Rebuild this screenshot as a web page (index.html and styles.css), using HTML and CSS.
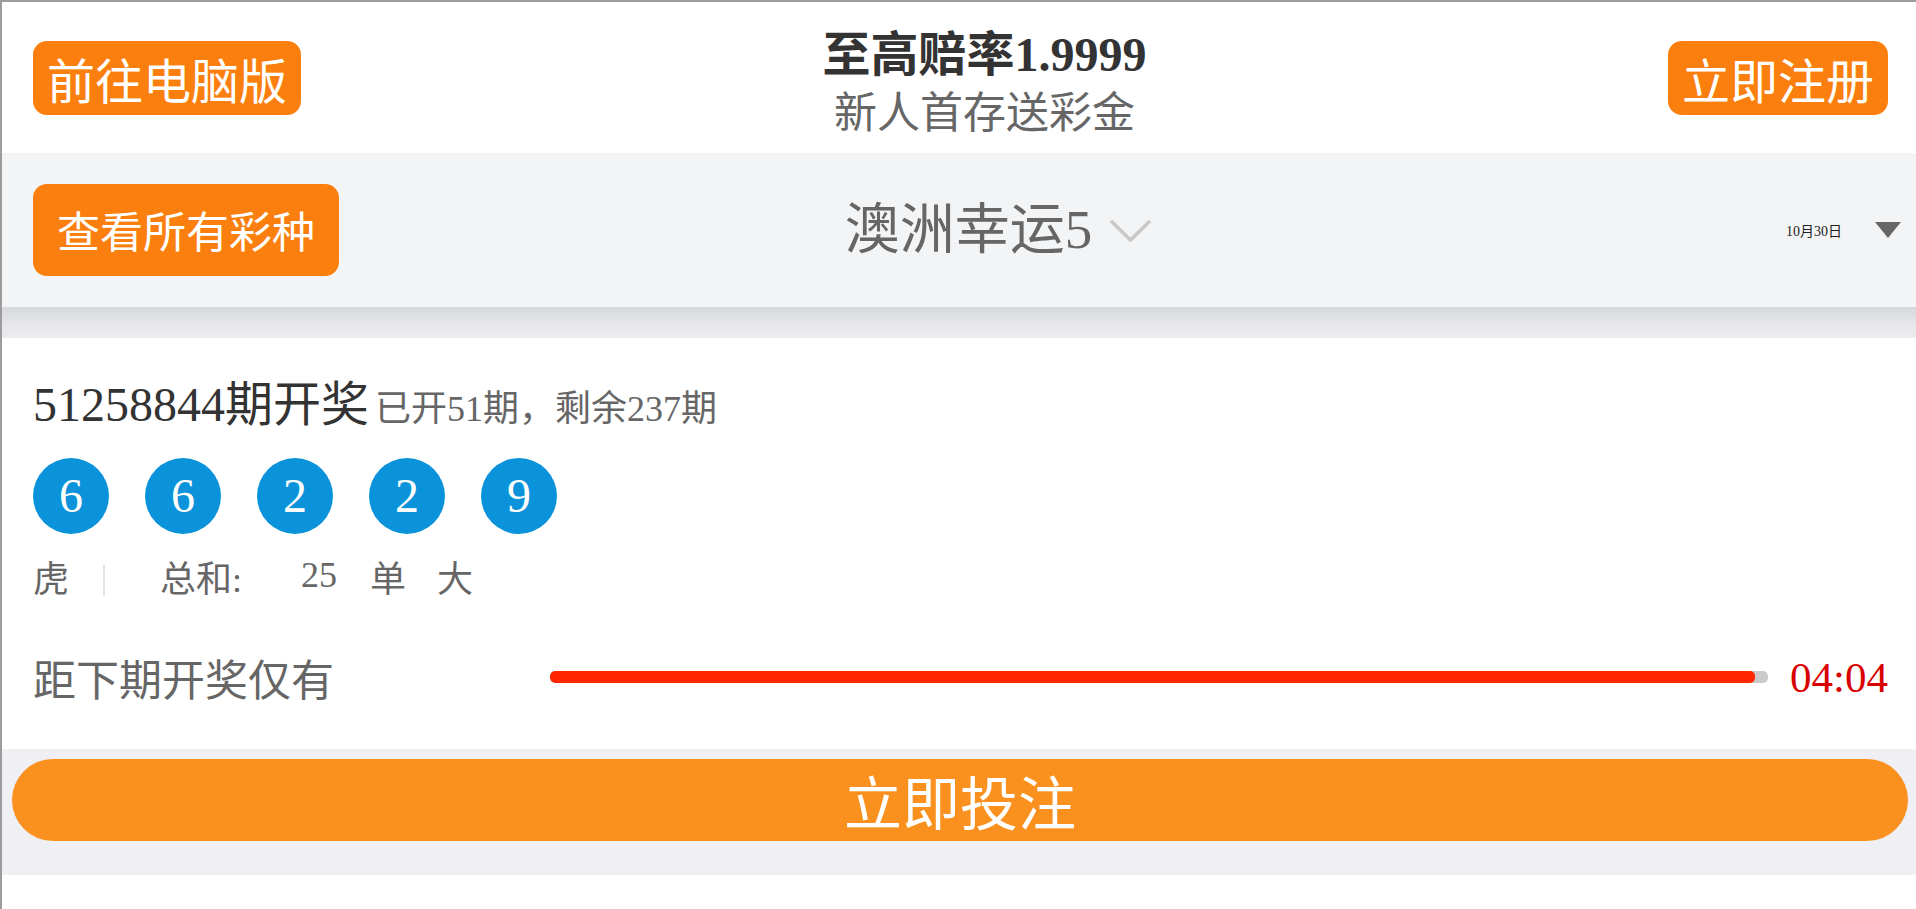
FILE: index.html
```html
<!DOCTYPE html>
<html lang="zh-CN">
<head>
<meta charset="utf-8">
<title>澳洲幸运5</title>
<link rel="stylesheet" href="styles.css">
</head>
<body>
<div class="page">
  <header class="top">
    <a class="btn-o">前往电脑版</a>
    <div class="promo">
      <div class="promo-title">至高赔率1.9999</div>
      <div class="promo-sub">新人首存送彩金</div>
    </div>
    <a class="btn-o">立即注册</a>
  </header>
  <nav class="bar">
    <a class="btn-all">查看所有彩种</a>
    <div class="game">
      <span class="game-name">澳洲幸运5</span>
      <svg class="chev" width="43" height="25" viewBox="0 0 43 25"><polyline points="2,3 21.5,22 41,3" fill="none" stroke="#c8c8c8" stroke-width="3.5"/></svg>
    </div>
    <div class="date">10月30日</div>
    <span class="tri"></span>
  </nav>
  <div class="shade"></div>
  <section class="draw">
    <div class="draw-head"><span class="issue">51258844期开奖</span><span class="issue-sub">已开51期，剩余237期</span></div>
    <div class="balls">
      <span class="ball">6</span>
      <span class="ball">6</span>
      <span class="ball">2</span>
      <span class="ball">2</span>
      <span class="ball">9</span>
    </div>
    <div class="stats">
      <span class="st-tiger">虎</span>
      <span class="st-sep"></span>
      <span class="st-sum">总和:</span>
      <span class="st-num">25</span>
      <span class="st-odd">单</span>
      <span class="st-big">大</span>
    </div>
    <div class="timer">
      <span class="timer-label">距下期开奖仅有</span>
      <div class="progress"><div class="progress-fill" style="width:98.9%"></div></div>
      <span class="timer-time">04:04</span>
    </div>
  </section>
  <div class="bet-wrap"><a class="bet">立即投注</a></div>
</div>
</body>
</html>
```
FILE: styles.css
```css
* { box-sizing: border-box; }
html, body { margin: 0; padding: 0; background: #fff; }
body {
  font-family: "Liberation Serif", "Noto Sans CJK SC", serif;
  color: #333;
}
a { text-decoration: none; cursor: pointer; }

.page {
  border-top: 2px solid #9c9c9c;
  border-left: 2px solid #9c9c9c;
  min-height: 909px;
  background: #fff;
}

/* header */
.top {
  height: 151px;
  display: flex;
  align-items: center;
  padding: 0 28px 0 31px;
  background: #fff;
}
.btn-o {
  flex: none;
  height: 74px;
  line-height: 74px;
  padding: 0 14px;
  border-radius: 14px;
  background: #fb7f0e;
  color: #fff;
  font-size: 48px;
  font-family: "Noto Sans CJK SC", sans-serif;
}
.promo {
  flex: 1;
  align-self: flex-start;
  padding-top: 23px;
  text-align: center;
}
.promo-title {
  font-size: 48px;
  line-height: 60px;
  font-weight: bold;
  color: #333;
}
.promo-sub {
  font-size: 43px;
  line-height: 57px;
  color: #666;
}

/* game bar */
.bar {
  height: 154px;
  display: flex;
  align-items: center;
  padding: 0 15px 0 31px;
  background: #f3f4f6;
}
.btn-all {
  flex: none;
  height: 92px;
  line-height: 90px;
  padding: 0 24px;
  border-radius: 14px;
  background: #fb7f0e;
  color: #fff;
  font-size: 43px;
  font-family: "Noto Sans CJK SC", sans-serif;
}
.game {
  flex: 1;
  display: flex;
  align-items: center;
  justify-content: center;
  padding-right: 128px;
}
.game-name {
  font-size: 55px;
  line-height: 70px;
  color: #666;
}
.chev { margin-left: 17px; display: block; }
.date {
  font-size: 14px;
  color: #222;
}
.tri {
  margin-left: 33px;
  width: 0;
  height: 0;
  border-left: 13px solid transparent;
  border-right: 13px solid transparent;
  border-top: 16px solid #666;
}
.shade {
  height: 31px;
  background: linear-gradient(#d7d8db, #e6e7ea 55%, #ececef);
}

/* draw */
.draw {
  padding: 37px 28px 42px 31px;
}
.draw-head {
  height: 60px;
  line-height: 60px;
  white-space: nowrap;
  overflow: visible;
}
.issue { font-size: 48px; color: #333; }
.issue-sub { font-size: 36px; color: #666; margin-left: 6px; }

.balls {
  margin-top: 23px;
  display: flex;
  gap: 36px;
}
.ball {
  width: 76px;
  height: 76px;
  border-radius: 50%;
  background: #0a93da;
  color: #fff;
  font-size: 48px;
  line-height: 76px;
  text-align: center;
}

.stats {
  margin-top: 24px;
  height: 44px;
  display: flex;
  align-items: center;
  font-size: 36px;
  line-height: 44px;
  color: #666;
}
.st-sep {
  width: 2px;
  height: 31px;
  background: #e2e2e2;
  margin-left: 34px;
}
.st-sum { margin-left: 55px; }
.st-num { margin-left: 59px; position: relative; top: -5px; }
.st-odd { margin-left: 33px; }
.st-big { margin-left: 31px; }

.timer {
  margin-top: 45px;
  height: 60px;
  display: flex;
  align-items: center;
}
.timer-label {
  flex: none;
  width: 517px;
  font-size: 43px;
  color: #666;
}
.progress {
  flex: 1;
  height: 12px;
  border-radius: 5px;
  background: #cacaca;
  overflow: hidden;
}
.progress-fill {
  height: 100%;
  background: #ff2600;
  border-radius: 5px;
}
.timer-time {
  flex: none;
  margin-left: 22px;
  font-size: 43px;
  color: #d90000;
}

/* bet */
.bet-wrap {
  background: #efeff4;
  padding: 10px 8px 34px 10px;
}
.bet {
  display: block;
  height: 82px;
  line-height: 82px;
  border-radius: 41px;
  background: #fa911f;
  color: #fff;
  text-align: center;
  font-size: 58px;
  font-family: "Noto Sans CJK SC", sans-serif;
}
```
